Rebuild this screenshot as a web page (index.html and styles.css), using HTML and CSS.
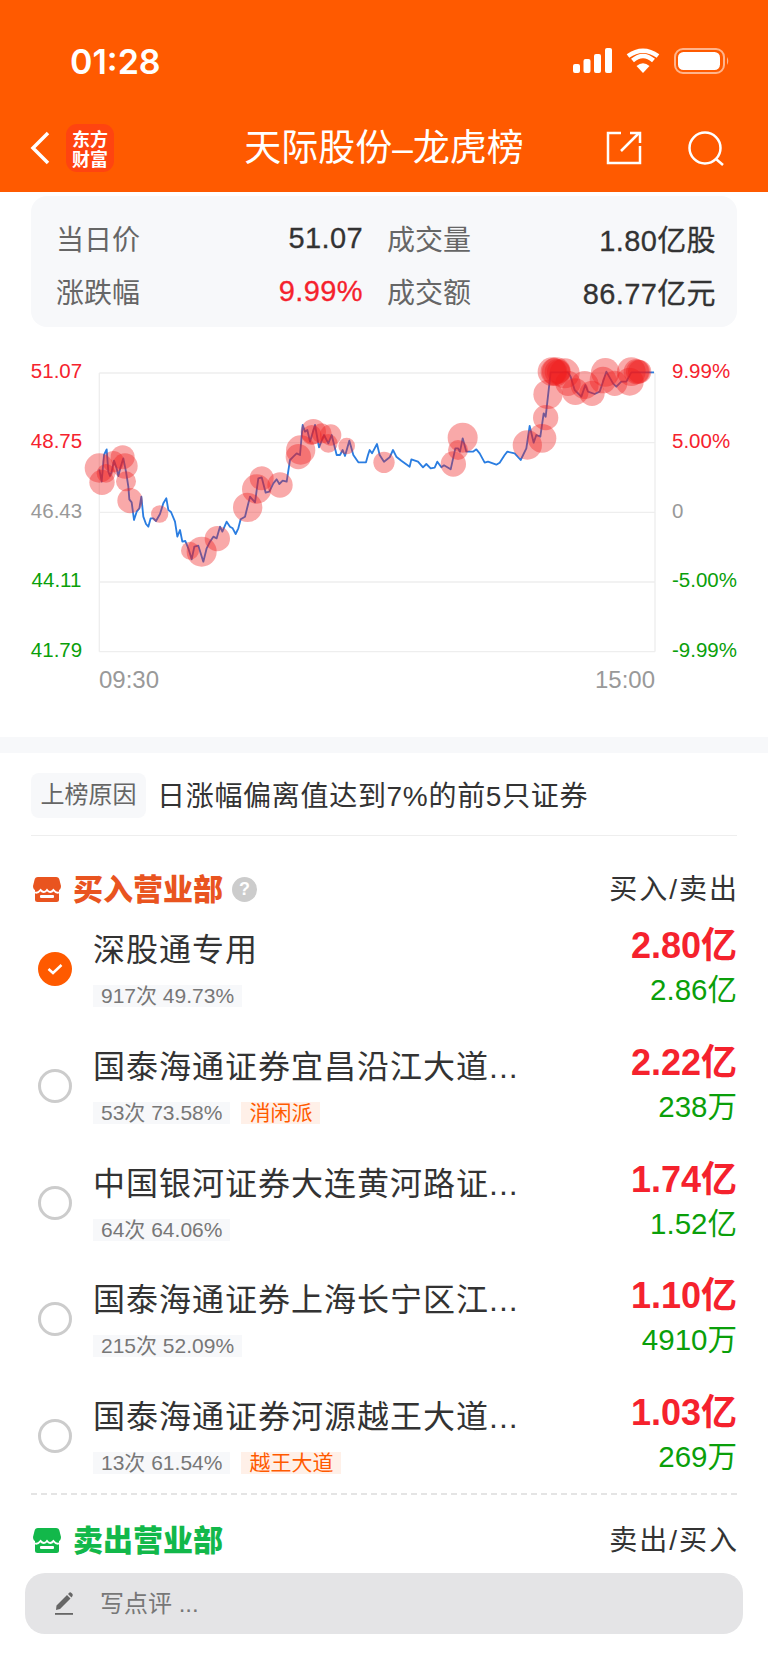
FILE: index.html
```html
<!DOCTYPE html>
<html lang="zh-CN">
<head>
    <meta charset="UTF-8">
    <meta name="viewport" content="width=device-width, initial-scale=1.0">
    <title>天际股份-龙虎榜</title>
    <link rel="stylesheet" href="styles.css">
</head>
<body>

    <header class="top">
        <div class="status">
            <span class="time">01:28</span>
            <div class="status-icons">
                <svg width="39" height="25" viewBox="0 0 39 25"><rect x="0" y="16" width="7" height="9" rx="2"/><rect x="10.5" y="11" width="7" height="14" rx="2"/><rect x="21" y="6" width="7" height="19" rx="2"/><rect x="32" y="0" width="7" height="25" rx="2"/></svg>
                <svg width="34" height="25" viewBox="0 0 34 25"><path d="M17 25 L10.500 18 Q17 12.500 23.500 18 Z"/><path class="arc" d="M6.500 12.500 Q17 3.500 27.500 12.500"/><path class="arc" d="M2 6.500 Q17 -4 32 6.500" transform="translate(0 1.500)"/></svg>
                <svg width="56" height="26" viewBox="0 0 56 26"><rect class="batt-line" x="1" y="1" width="49" height="24" rx="8"/><rect x="4" y="4" width="42" height="18" rx="5.500"/><path class="batt-nub" d="M53 9 Q55.500 13 53 17 Z"/></svg>
            </div>
        </div>
        <nav class="nav">
            <div class="nav-left">
                <svg class="back" width="20" height="34" viewBox="0 0 20 34"><path d="M18 2 L3 17 L18 32"/></svg>
                <div class="logo">东方财富</div>
            </div>
            <h1 class="title">天际股份<i>–</i>龙虎榜</h1>
            <div class="nav-right">
                <svg width="36" height="34" viewBox="0 0 36 34"><path d="M15 2 H2 V32 H34 V15"/><path d="M15 20 L33 2"/><path d="M24 2 H34 V12"/></svg>
                <svg width="37" height="35" viewBox="0 0 37 35"><circle cx="17" cy="17" r="15.500"/><path d="M28 28 L35 34"/></svg>
            </div>
        </nav>
    </header>

    <section class="stats">
        <div class="stat"><span class="stat-name">当日价</span><span class="stat-val">51.07</span></div>
        <div class="stat"><span class="stat-name">成交量</span><span class="stat-val">1.80亿股</span></div>
        <div class="stat"><span class="stat-name">涨跌幅</span><span class="stat-val up">9.99%</span></div>
        <div class="stat"><span class="stat-name">成交额</span><span class="stat-val">86.77亿元</span></div>
    </section>

    <section class="chart">
        <div class="chart-row">
            <div class="axis axis-left">
                <span class="up">51.07</span>
                <span class="up">48.75</span>
                <span class="flat">46.43</span>
                <span class="down">44.11</span>
                <span class="down">41.79</span>
            </div>
            <svg class="plot" width="556" height="279" viewBox="297 99 1668 837">
                <g class="grid">
                    <path d="M298 99 H1965 M298 308 H1965 M298 517 H1965 M298 726 H1965 M298 935 H1965 M298 99 V935 M1965 99 V935"/>
                </g>
                <polyline class="price" points="298,388 305,425 312,345 320,328 325,395 330,408 335,395 342,362 350,385 355,408 362,380 370,355 378,395 385,440 388,478 395,487 402,540 410,515 418,505 424,470 430,530 438,552 445,560 452,535 460,535 468,543 480,522 490,490 499,475 505,510 513,516 525,545 532,590 540,570 547,605 556,603 565,625 575,658 583,620 595,617 610,665 620,625 630,605 640,590 650,595 660,560 667,575 680,545 690,560 698,565 707,582 715,565 722,538 735,530 740,510 750,470 765,487 775,415 785,412 797,458 808,455 820,430 830,418 838,432 848,422 860,425 870,360 880,350 890,340 900,345 908,255 915,275 922,270 930,305 945,255 957,322 972,285 985,310 995,285 1010,345 1020,345 1028,330 1035,348 1048,302 1060,345 1075,367 1098,367 1104,345 1109,330 1116,340 1131,312 1139,345 1152,365 1169,352 1179,330 1189,350 1204,362 1229,380 1234,358 1254,365 1269,382 1279,372 1292,385 1304,383 1312,365 1324,382 1332,376 1352,388 1366,325 1374,325 1380,335 1388,295 1399,335 1419,335 1429,328 1439,340 1454,368 1464,365 1489,374 1499,368 1514,345 1522,335 1544,340 1562,360 1579,325 1589,258 1601,308 1609,285 1621,290 1631,220 1637,230 1652,97 1704,97 1712,110 1724,150 1744,170 1756,135 1764,155 1784,162 1799,155 1819,95 1839,130 1849,140 1864,125 1879,125 1894,97 1962,97"/>
                <g class="hits">
                    <circle cx="298" cy="384" r="44"/>
                    <circle cx="306" cy="427" r="38"/>
                    <circle cx="318" cy="400" r="28"/>
                    <circle cx="340" cy="365" r="32"/>
                    <circle cx="368" cy="352" r="36"/>
                    <circle cx="375" cy="378" r="38"/>
                    <circle cx="378" cy="424" r="30"/>
                    <circle cx="390" cy="482" r="38"/>
                    <circle cx="479" cy="522" r="26"/>
                    <circle cx="570" cy="632" r="27"/>
                    <circle cx="605" cy="635" r="45"/>
                    <circle cx="652" cy="596" r="38"/>
                    <circle cx="743" cy="502" r="44"/>
                    <circle cx="770" cy="447" r="44"/>
                    <circle cx="785" cy="415" r="36"/>
                    <circle cx="840" cy="435" r="38"/>
                    <circle cx="902" cy="330" r="44"/>
                    <circle cx="895" cy="350" r="38"/>
                    <circle cx="940" cy="275" r="38"/>
                    <circle cx="935" cy="285" r="30"/>
                    <circle cx="965" cy="280" r="30"/>
                    <circle cx="992" cy="285" r="32"/>
                    <circle cx="985" cy="310" r="28"/>
                    <circle cx="1040" cy="318" r="25"/>
                    <circle cx="1152" cy="367" r="32"/>
                    <circle cx="1360" cy="372" r="38"/>
                    <circle cx="1388" cy="293" r="45"/>
                    <circle cx="1374" cy="330" r="30"/>
                    <circle cx="1582" cy="315" r="44"/>
                    <circle cx="1626" cy="295" r="43"/>
                    <circle cx="1637" cy="233" r="38"/>
                    <circle cx="1644" cy="163" r="44"/>
                    <circle cx="1656" cy="95" r="43"/>
                    <circle cx="1662" cy="95" r="40"/>
                    <circle cx="1669" cy="95" r="43"/>
                    <circle cx="1672" cy="95" r="38"/>
                    <circle cx="1676" cy="95" r="35"/>
                    <circle cx="1694" cy="100" r="45"/>
                    <circle cx="1704" cy="130" r="38"/>
                    <circle cx="1726" cy="155" r="40"/>
                    <circle cx="1754" cy="135" r="42"/>
                    <circle cx="1776" cy="160" r="38"/>
                    <circle cx="1816" cy="97" r="43"/>
                    <circle cx="1809" cy="120" r="40"/>
                    <circle cx="1844" cy="130" r="38"/>
                    <circle cx="1889" cy="125" r="42"/>
                    <circle cx="1894" cy="95" r="43"/>
                    <circle cx="1909" cy="95" r="38"/>
                    <circle cx="1914" cy="95" r="36"/>
                    <circle cx="1919" cy="95" r="35"/>
                </g>
            </svg>
            <div class="axis axis-right">
                <span class="up">9.99%</span>
                <span class="up">5.00%</span>
                <span class="flat">0</span>
                <span class="down">-5.00%</span>
                <span class="down">-9.99%</span>
            </div>
        </div>
        <div class="times"><span>09:30</span><span>15:00</span></div>
    </section>

    <div class="band"></div>

    <section class="detail">
        <div class="reason">
            <span class="reason-tag">上榜原因</span>
            <span class="reason-text">日涨幅偏离值达到7%的前5只证券</span>
        </div>

        <div class="block-head first">
            <div class="block-title buy">
                <svg width="28" height="25" viewBox="0 0 28 25"><rect x="2" y="10" width="24" height="15" rx="2.500"/><path class="wave" d="M1 15 Q4.500 17 7.500 13 Q11 17 14 13 Q17 17 20.500 13 Q23.500 17 27 15"/><path d="M5 0 H23 Q26 0 26.500 3 L28 9 Q28 13 24.500 13.500 Q22 13.500 20.500 11 Q17 14.500 14 11 Q11 14.500 7.500 11 Q6 13.500 3.500 13.500 Q0 13 0 9 L1.500 3 Q2 0 5 0 Z"/><rect class="slot" x="7" y="18" width="14" height="3" rx="1"/></svg>
                <span class="block-name">买入营业部</span>
                <span class="help">?</span>
            </div>
            <span class="block-side">买入/卖出</span>
        </div>

        <div class="brokers">
            <div class="broker">
                <span class="radio checked"><svg width="16" height="12" viewBox="0 0 16 12"><path d="M1.500 6 L6 10 L14.500 2"/></svg></span>
                <div class="broker-main">
                    <div class="broker-name">深股通专用</div>
                    <div class="tags"><span class="tag">917次 49.73%</span></div>
                </div>
                <div class="broker-nums"><b>2.80亿</b><span>2.86亿</span></div>
            </div>
            <div class="broker">
                <span class="radio"></span>
                <div class="broker-main">
                    <div class="broker-name">国泰海通证券宜昌沿江大道...</div>
                    <div class="tags"><span class="tag">53次 73.58%</span><span class="tag tag-hot">消闲派</span></div>
                </div>
                <div class="broker-nums"><b>2.22亿</b><span>238万</span></div>
            </div>
            <div class="broker">
                <span class="radio"></span>
                <div class="broker-main">
                    <div class="broker-name">中国银河证券大连黄河路证...</div>
                    <div class="tags"><span class="tag">64次 64.06%</span></div>
                </div>
                <div class="broker-nums"><b>1.74亿</b><span>1.52亿</span></div>
            </div>
            <div class="broker">
                <span class="radio"></span>
                <div class="broker-main">
                    <div class="broker-name">国泰海通证券上海长宁区江...</div>
                    <div class="tags"><span class="tag">215次 52.09%</span></div>
                </div>
                <div class="broker-nums"><b>1.10亿</b><span>4910万</span></div>
            </div>
            <div class="broker">
                <span class="radio"></span>
                <div class="broker-main">
                    <div class="broker-name">国泰海通证券河源越王大道...</div>
                    <div class="tags"><span class="tag">13次 61.54%</span><span class="tag tag-hot">越王大道</span></div>
                </div>
                <div class="broker-nums"><b>1.03亿</b><span>269万</span></div>
            </div>
        </div>

        <div class="block-head second">
            <div class="block-title sell">
                <svg width="28" height="25" viewBox="0 0 28 25"><rect x="2" y="10" width="24" height="15" rx="2.500"/><path class="wave" d="M1 15 Q4.500 17 7.500 13 Q11 17 14 13 Q17 17 20.500 13 Q23.500 17 27 15"/><path d="M5 0 H23 Q26 0 26.500 3 L28 9 Q28 13 24.500 13.500 Q22 13.500 20.500 11 Q17 14.500 14 11 Q11 14.500 7.500 11 Q6 13.500 3.500 13.500 Q0 13 0 9 L1.500 3 Q2 0 5 0 Z"/><rect class="slot" x="7" y="18" width="14" height="3" rx="1"/></svg>
                <span class="block-name">卖出营业部</span>
            </div>
            <span class="block-side">卖出/买入</span>
        </div>
    </section>

    <div class="comment">
        <svg width="18" height="23" viewBox="0 0 18 23"><path d="M1.500 13.500 L12 3 L15.500 6.500 L5 17 L1 18 Z M13 2 L14.500 0.500 Q15.500 0 16.500 1 L17.500 2 Q18 3 17.500 4 L16.500 5.500 Z"/><rect x="0" y="21" width="18" height="1.800"/></svg>
        <span class="comment-text">写点评 ...</span>
    </div>

</body>
</html>
```
FILE: styles.css
```css
* {
    margin: 0;
    padding: 0;
    box-sizing: border-box;
}
body {
    width: 768px;
    height: 1663px;
    overflow: hidden;
    background: #fff;
    color: #333;
    font-family: "Liberation Sans", "Noto Sans CJK SC", sans-serif;
}
.up {
    color: #f5222d;
}
.down {
    color: #0a9f0a;
}
.flat {
    color: #999;
}

/* top bar */
.top {
    height: 192px;
    padding-top: 48px;
    background: #ff5a00;
    color: #fff;
}
.status {
    display: flex;
    justify-content: space-between;
    align-items: center;
    height: 25px;
    padding: 0 38px 0 70px;
}
.time {
    padding-top: 2px;
    font-family: Inter, sans-serif;
    font-size: 34px;
    font-weight: 600;
}
.status-icons {
    display: flex;
    align-items: center;
    gap: 14px;
}
.status-icons svg {
    fill: #fff;
}
.status-icons .arc {
    fill: none;
    stroke: #fff;
    stroke-width: 4.500px;
}
.batt-line {
    fill: none;
    stroke: rgba(255, 255, 255, 0.55);
    stroke-width: 2px;
}
.status-icons .batt-nub {
    fill: rgba(255, 255, 255, 0.55);
}
.nav {
    display: grid;
    grid-template-columns: 1fr auto 1fr;
    align-items: center;
    height: 48px;
    margin-top: 50px;
}
.nav-left {
    display: flex;
    align-items: center;
    gap: 16px;
    padding-left: 30px;
}
.back path {
    fill: none;
    stroke: #fff;
    stroke-width: 3.500px;
}
.logo {
    width: 48px;
    height: 48px;
    padding: 4px 6px 0;
    border-radius: 11px;
    background: #ff4410;
    font-size: 18px;
    font-weight: 700;
    line-height: 20px;
    font-family: "Noto Sans CJK SC", sans-serif;
    text-align: center;
}
.title {
    padding-top: 2px;
    font-size: 37px;
    font-weight: 400;
    line-height: 48px;
    white-space: nowrap;
}
.title i {
    font-style: normal;
}
.nav-right {
    display: flex;
    justify-content: flex-end;
    align-items: center;
    gap: 46px;
    padding-right: 43px;
}
.nav-right svg {
    fill: none;
    stroke: #fff;
    stroke-width: 2.500px;
}

/* day summary */
.stats {
    display: grid;
    grid-template-columns: 307px 1fr;
    grid-auto-rows: 53px;
    column-gap: 24px;
    align-content: center;
    height: 131px;
    margin: 4px 31px 0;
    padding: 6px 21px 0 25px;
    border-radius: 16px;
    background: #f7f8fa;
    font-size: 28px;
}
.stat {
    display: flex;
    justify-content: space-between;
    align-items: center;
}
.stat-name {
    color: #666;
}
.stat-val {
    font-size: 29px;
    letter-spacing: 0.400px;
    -webkit-text-stroke: 0.3px currentColor;
}
.stat-val:not(.up) {
    color: #333;
}

/* intraday chart */
.chart {
    height: 410px;
    padding-top: 46px;
}
.chart-row {
    display: flex;
}
.axis {
    display: flex;
    flex-direction: column;
    justify-content: space-between;
    height: 303px;
    margin-top: -14px;
    font-size: 20.500px;
    line-height: 24px;
}
.axis-left {
    width: 99px;
    padding-right: 17px;
    padding-left: 31px;
    align-items: center;
}
.axis-right {
    margin-left: 17px;
}
.plot {
    flex: none;
    overflow: visible;
}
.grid path {
    fill: none;
    stroke: #eee;
    stroke-width: 4px;
}
.price {
    fill: none;
    stroke: #2a7de1;
    stroke-width: 5.500px;
    stroke-linejoin: round;
}
.hits circle {
    fill: #f01e1e;
    fill-opacity: 0.38;
}
.times {
    display: flex;
    justify-content: space-between;
    width: 556px;
    margin: 4px 0 0 99px;
    color: #999;
    font-size: 24px;
    line-height: 28px;
}
.band {
    height: 16px;
    background: #f7f8fa;
}

/* list part */
.detail {
    padding: 20px 31px 0;
}
.reason {
    display: flex;
    align-items: center;
    gap: 11px;
    padding-bottom: 17px;
    border-bottom: 1px solid #eee;
}
.reason-tag {
    width: 115px;
    height: 45px;
    border-radius: 8px;
    background: #f7f8fa;
    color: #666;
    font-size: 24px;
    line-height: 43px;
    text-align: center;
}
.reason-text {
    padding-bottom: 4px;
    font-size: 28px;
    letter-spacing: 0.700px;
}
.block-head {
    display: flex;
    justify-content: space-between;
    align-items: center;
    height: 46px;
}
.block-head.first {
    margin: 30px 0 6px;
}
.block-head.second {
    margin: 22px 0 10px;
}
.block-title {
    display: flex;
    align-items: center;
    font-size: 30px;
    font-weight: 900;
    font-family: "Noto Sans CJK SC", sans-serif;
    padding-left: 2px;
}
.block-title svg {
    margin-right: 12px;
}
.block-name {
    padding-bottom: 4px;
}
.buy {
    color: #e9541f;
    fill: #e9541f;
}
.sell {
    color: #12b84a;
    fill: #12b84a;
}
.block-title .wave {
    fill: none;
    stroke: #fff;
    stroke-width: 2px;
}
.block-title .slot {
    fill: #fff;
}
.help {
    width: 25px;
    height: 25px;
    margin-left: 9px;
    border-radius: 50%;
    background: #ccc;
    color: #fff;
    font: 700 18px/25px "Liberation Sans", sans-serif;
    text-align: center;
}
.block-side {
    margin-right: -2px;
    padding-bottom: 4px;
    font-size: 28px;
    letter-spacing: 2px;
}
.brokers {
    border-bottom: 2px dashed #e4e4e4;
}
.broker {
    display: grid;
    grid-template-columns: 62px 1fr auto;
    height: 116.750px;
}
.broker:last-child {
    height: 108px;
}
.radio {
    display: flex;
    justify-content: center;
    align-items: center;
    width: 34px;
    height: 34px;
    margin: 34px 0 0 7px;
    border: 3px solid #ccc;
    border-radius: 50%;
}
.radio.checked {
    border: 0;
    background: #ff5a00;
}
.radio svg path {
    fill: none;
    stroke: #fff;
    stroke-width: 2.500px;
}
.broker-main {
    min-width: 0;
}
.broker-name {
    margin-top: 10px;
    font-size: 32px;
    line-height: 44px;
    letter-spacing: 1px;
    white-space: nowrap;
}
.tags {
    display: flex;
    gap: 11px;
    margin-top: 13px;
}
.tag {
    height: 22px;
    padding: 0 8px;
    background: #f7f8fa;
    color: #777;
    font-size: 21px;
    line-height: 22px;
}
.tag-hot {
    background: #fff0e8;
    color: #ff5a00;
}
.broker-nums {
    display: flex;
    flex-direction: column;
    align-items: flex-end;
}
.broker-nums b {
    margin-top: 6px;
    color: #f5222d;
    font-size: 36px;
    line-height: 44px;
}
.broker-nums span {
    margin-top: 2px;
    color: #0a9f0a;
    font-size: 29.500px;
    line-height: 40px;
}

/* bottom input */
.comment {
    display: flex;
    align-items: center;
    gap: 27px;
    height: 61px;
    margin: 0 25px;
    padding-left: 30px;
    border-radius: 20px;
    background: #e4e4e6;
    color: #777;
    font-size: 24px;
}
.comment svg {
    fill: #666;
}
.comment-text {
    padding-bottom: 4px;
}
```
